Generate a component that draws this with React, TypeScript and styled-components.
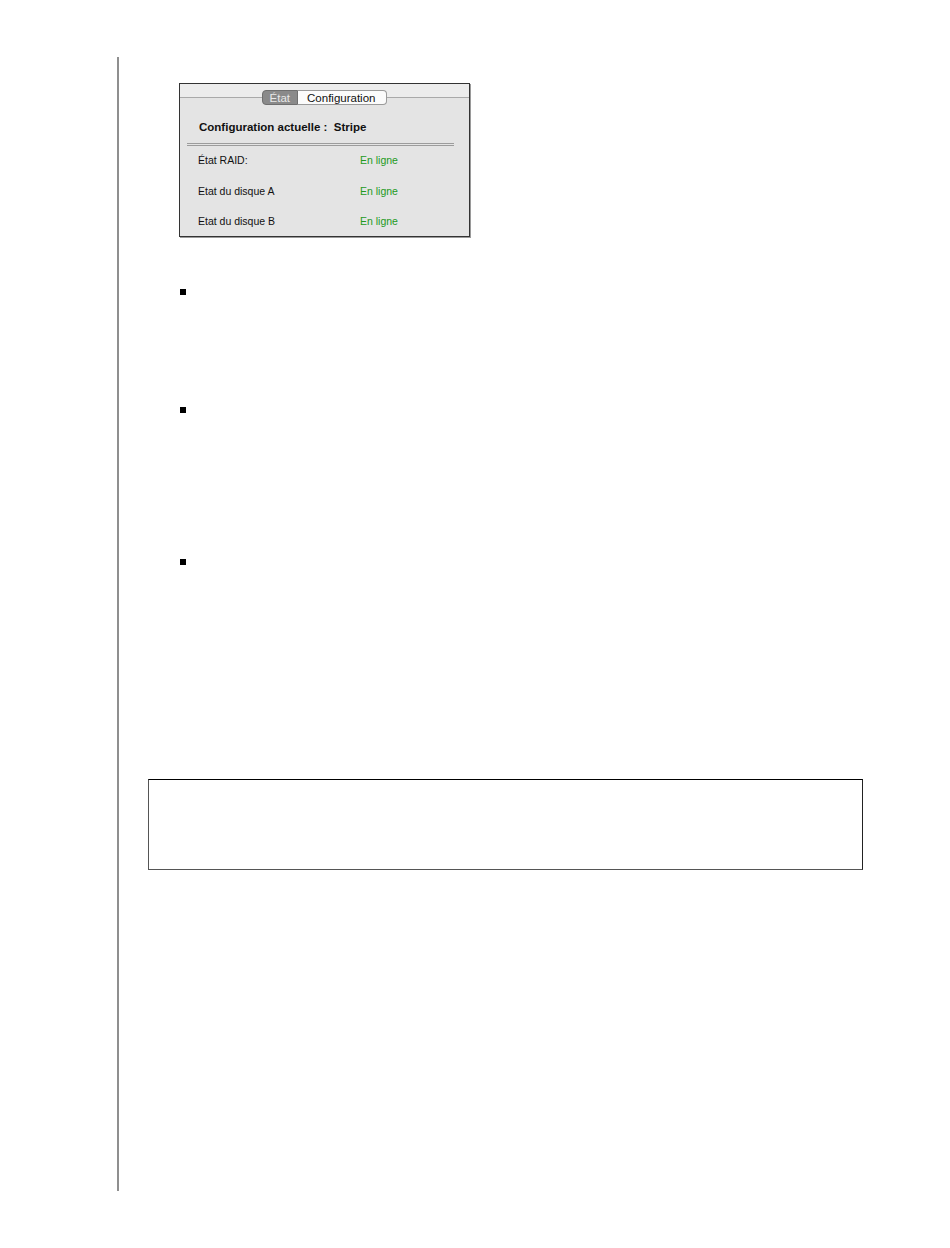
import styled, { createGlobalStyle } from "styled-components";

const GlobalStyle = createGlobalStyle`
  body {
    margin: 0;
    background: #ffffff;
    font-family: "Liberation Sans", Arial, sans-serif;
  }
`;

const Page = styled.div`
  width: 950px;
  height: 1248px;
  padding: 57px 0 0 117px;
  box-sizing: border-box;
`;

const Column = styled.div`
  height: 1134px;
  border-left: 2px solid #8f8f8f;
  display: flex;
  flex-direction: column;
`;

const Panel = styled.div`
  margin: 26px 0 0 60px;
  width: 289px;
  height: 152px;
  border: 1px solid #333333;
  box-shadow: 1px 1px 0 #9a9a9a;
  background: #e4e4e4;
  display: flex;
  flex-direction: column;
`;

const TabStrip = styled.div`
  height: 22px;
  padding-top: 6px;
  box-sizing: border-box;
  display: flex;
  justify-content: center;
  background: linear-gradient(
    #ececec 0 13px,
    #a9a9a9 13px 14px,
    transparent 14px
  );
`;

const Tab = styled.div<{ $active?: boolean }>`
  height: 15px;
  box-sizing: border-box;
  display: flex;
  align-items: center;
  font-size: 11.5px;
  color: ${(p) => (p.$active ? "#e8e8e8" : "#111111")};
  background: ${(p) => (p.$active ? "#8a8a8a" : "#fbfbfb")};
  border: 1px solid ${(p) => (p.$active ? "#6f6f6f" : "#9a9a9a")};
  padding: ${(p) => (p.$active ? "0 7px" : "0 11px 0 9px")};
  border-radius: ${(p) => (p.$active ? "4px 0 0 4px" : "0 4px 4px 0")};
  ${(p) => (p.$active ? "" : "border-left: none;")}
`;

const Heading = styled.div`
  margin: 15px 0 0 19px;
  font-size: 11.5px;
  font-weight: bold;
  color: #111111;
  white-space: pre;
`;

const DoubleRule = styled.div`
  margin: 10px 15px 0 7px;
  height: 3px;
  border-top: 1px solid #9c9c9c;
  border-bottom: 1px solid #9c9c9c;
  box-sizing: border-box;
`;

const Rows = styled.div`
  margin: 8px 0 0 18px;
  display: flex;
  flex-direction: column;
  gap: 17.5px;
`;

const Row = styled.div`
  display: grid;
  grid-template-columns: 162px auto;
  font-size: 10.5px;
  line-height: 13px;
  color: #111111;
`;

const Value = styled.span`
  color: #229a22;
`;

const Bullet = styled.div<{ $gap: number }>`
  margin: ${(p) => p.$gap}px 0 0 61px;
  width: 6px;
  height: 6px;
  background: #000000;
`;

const NoteBox = styled.div`
  margin: 214px 0 0 29px;
  width: 713px;
  height: 89px;
  border: 1px solid #555555;
  border-top-color: #000000;
  border-right-color: #222222;
`;

const rows = [
  { label: "État RAID:", value: "En ligne" },
  { label: "Etat du disque A", value: "En ligne" },
  { label: "Etat du disque B", value: "En ligne" },
];

function App() {
  return (
    <>
      <GlobalStyle />
      <Page>
        <Column>
          <Panel>
            <TabStrip>
              <Tab $active>État</Tab>
              <Tab>Configuration</Tab>
            </TabStrip>
            <Heading>Configuration actuelle :  Stripe</Heading>
            <DoubleRule />
            <Rows>
              {rows.map((r) => (
                <Row key={r.label}>
                  <span>{r.label}</span>
                  <Value>{r.value}</Value>
                </Row>
              ))}
            </Rows>
          </Panel>
          <Bullet $gap={52} />
          <Bullet $gap={112} />
          <Bullet $gap={146} />
          <NoteBox />
        </Column>
      </Page>
    </>
  );
}

export default App;
